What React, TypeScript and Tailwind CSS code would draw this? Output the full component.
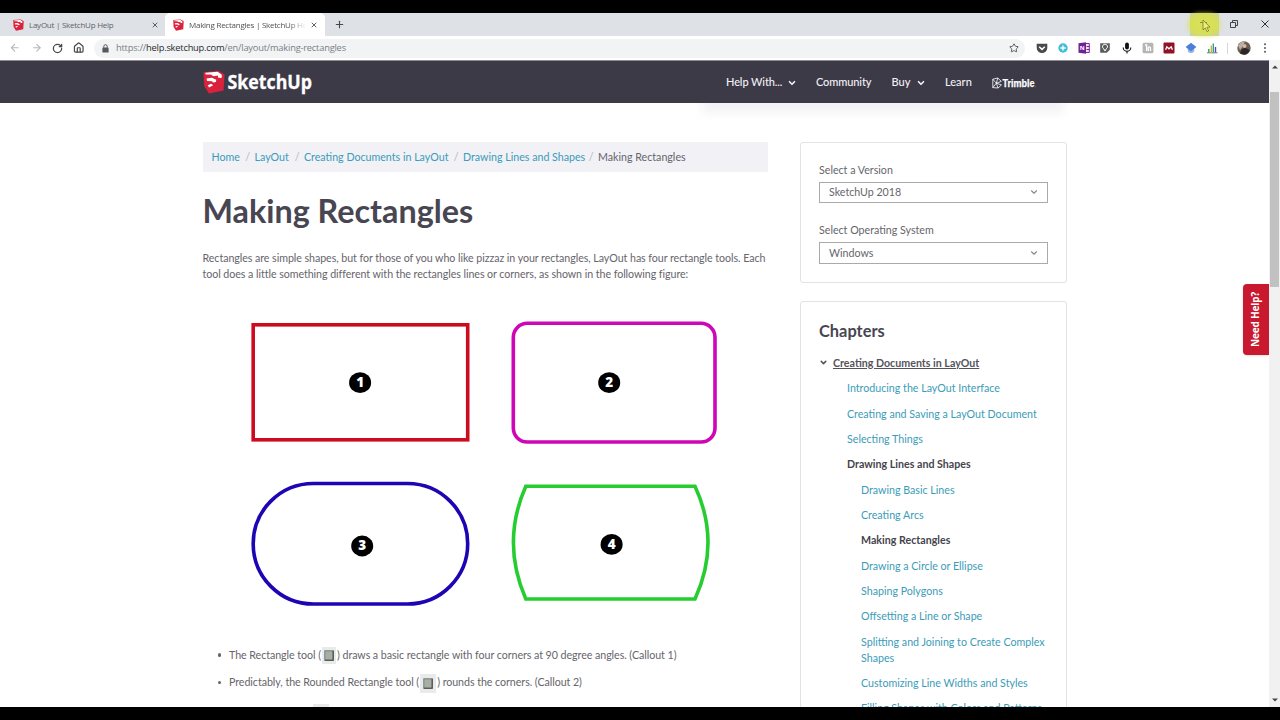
import type { ReactNode } from 'react';
import { ArrowLeft, ArrowRight, ChevronDown, House, Plus, RotateCw, Star, X } from 'lucide-react';

interface Crumb {
  label: string;
  width: string;
}

interface Chapter {
  label: string;
  nested?: boolean;
  current?: boolean;
}

const crumbs: Crumb[] = [
  { label: 'Home', width: 'w-[43px]' },
  { label: 'LayOut', width: 'w-[49.5px]' },
  { label: 'Creating Documents in LayOut', width: 'w-[159px]' },
  { label: 'Drawing Lines and Shapes', width: 'w-[135px]' },
];

const chapters: Chapter[] = [
  { label: 'Introducing the LayOut Interface' },
  { label: 'Creating and Saving a LayOut Document' },
  { label: 'Selecting Things' },
  { label: 'Drawing Lines and Shapes', current: true },
  { label: 'Drawing Basic Lines', nested: true },
  { label: 'Creating Arcs', nested: true },
  { label: 'Making Rectangles', nested: true, current: true },
  { label: 'Drawing a Circle or Ellipse', nested: true },
  { label: 'Shaping Polygons', nested: true },
  { label: 'Offsetting a Line or Shape', nested: true },
  { label: 'Splitting and Joining to Create Complex Shapes', nested: true },
  { label: 'Customizing Line Widths and Styles', nested: true },
  { label: 'Filling Shapes with Colors and Patterns', nested: true },
];

function SketchUpMark({ className }: { className: string }) {
  return (
    <svg viewBox="0 0 22 24" className={className}>
      <path d="M0.5 2.2 15.5 0.8 21.5 4.5 20.5 20.5 6 23.5 1.2 16Z" fill="#d9233c" />
      <path d="M2.4 2.8 14.6 1.8 18.8 4.8 18.6 8 15.2 7.8 14.8 5.6 10.4 6.2 8 4.6 2.6 4.6Z" fill="#fff" />
      <path d="M3.6 8.6 8.8 7.8 13.2 9.8 13 12 9.8 12.6 9.2 11.2 4 11Z" fill="#fff" />
      <path d="M4.8 15.2 8.2 13.8 10.2 15.2 6 17.4Z" fill="#fff" />
    </svg>
  );
}

function TabStrip() {
  return (
    <div className="flex h-[23px] shrink-0 items-stretch bg-[#dee1e6] font-['Open_Sans',sans-serif] text-[8px] text-[#5f6368]">
      <div className="flex w-[165px] items-center pl-[13px] pr-[6px]">
        <SketchUpMark className="h-[12px] w-[11px]" />
        <span className="ml-[5px] flex-1 whitespace-nowrap tracking-[-0.25px]">LayOut | SketchUp Help</span>
        <X className="size-[8px] text-[#45484c]" strokeWidth={2.6} />
      </div>
      <div className="flex w-[160px] items-center rounded-t-[5px] bg-white pl-[8px] pr-[7px] text-[#45484c]">
        <SketchUpMark className="h-[12px] w-[11px] shrink-0" />
        <span className="ml-[5px] mr-[4px] w-[118px] overflow-hidden whitespace-nowrap bg-gradient-to-r from-[#45484c] from-85% to-white bg-clip-text tracking-[-0.25px] text-transparent">
          Making Rectangles | SketchUp Help
        </span>
        <X className="size-[8px] shrink-0" strokeWidth={2.6} />
      </div>
      <Plus className="ml-[8.5px] size-[11px] self-center text-[#45484c]" strokeWidth={2.4} />
      <div className="ml-auto flex">
        <div className="relative flex w-[29px] items-center justify-center bg-[#ccd29a]">
          <div className="absolute -left-[2px] top-0 h-[23px] w-[32px] rounded-full bg-[#dbe63a]/70 blur-[2px]" />
          <svg viewBox="0 0 12 14" className="relative mt-[3px] h-[14px] w-[12px]" fill="none">
            <path d="M1 3.5h7" stroke="#77802a" strokeWidth="0.8" />
            <path d="M4 1v10l2.3-2.1 1.7 3.8 1.7-.8L8 8.3l3-.2Z" fill="#e9ec83" stroke="#7d7f20" strokeWidth="0.8" />
          </svg>
        </div>
        <div className="flex w-[30px] items-center justify-center">
          <svg viewBox="0 0 8 8" className="-mt-[2px] size-[8px]" fill="none" stroke="#333" strokeWidth="0.9">
            <path d="M.5 2.5h5v5h-5zM2.5 2.5v-2h5v5h-2" />
          </svg>
        </div>
        <div className="flex w-[31px] items-center justify-center">
          <svg viewBox="0 0 8 8" className="-mt-[2px] size-[8px]" fill="none" stroke="#333">
            <path d="M.5.5l7 7M7.5.5l-7 7" />
          </svg>
        </div>
      </div>
    </div>
  );
}

function Extensions() {
  return (
    <div className="flex items-center gap-[9.3px]">
      <svg viewBox="0 0 12 12" className="size-[12px]">
        <path d="M.7 1.8h10.6v4a5.3 5.3 0 0 1-10.6 0Z" fill="#4a4a4d" />
        <path d="M3.2 4.8 6 7.4l2.8-2.6" fill="none" stroke="#fff" strokeWidth="1.5" />
      </svg>
      <svg viewBox="0 0 12 12" className="size-[12px]">
        <circle cx="6" cy="6" r="4.7" fill="#3fbfdb" />
        <path d="M6 3.4v5.2M3.4 6h5.2" stroke="#fff" strokeWidth="1.4" />
      </svg>
      <svg viewBox="0 0 12 12" className="size-[12px]">
        <path d="M5 1.5h6.3v9H5z" fill="#f3e6f8" stroke="#7b2a9d" />
        <path d="M8.5 4.5h3M8.5 7.5h3" stroke="#7b2a9d" />
        <path d="M.5 1.2 8 .3v11.4L.5 10.8Z" fill="#731f96" />
        <text x="4.2" y="8" fontSize="6" fontWeight="700" textAnchor="middle" fill="#fff" fontFamily="Open Sans">N</text>
      </svg>
      <svg viewBox="0 0 12 12" className="size-[12px]">
        <path d="M1.2 1.2h9.6v6.5l-3 3H1.2Z" fill="#5c5c5c" />
        <path d="M6 9 4.8 6.9a2.5 2.5 0 1 1 2.4 0Z" fill="none" stroke="#fff" strokeWidth="1" />
      </svg>
      <svg viewBox="0 0 12 12" className="size-[12px]">
        <rect x="4.1" y=".6" width="3.8" height="6.8" rx="1.9" fill="#111" />
        <path d="M2.2 5.5a3.8 3.8 0 0 0 7.6 0M6 9.2v2.2" fill="none" stroke="#111" strokeWidth="1.1" />
      </svg>
      <svg viewBox="0 0 12 12" className="size-[12px]">
        <rect x=".6" y=".8" width="10.8" height="10.4" rx="1.5" fill="#b5b5b5" />
        <path d="M3 3h1.6v6M6.3 9V5.4q2.2-1.2 2.2 1V9" fill="none" stroke="#fff" strokeWidth="1.3" />
      </svg>
      <svg viewBox="0 0 12 12" className="size-[12px]">
        <rect x=".5" y=".6" width="11" height="10.8" rx="1" fill="#8f1227" />
        <path d="M2.6 7.8 3.8 4.8 6 6.8 8.2 4.8 9.4 7.8" fill="none" stroke="#fff" strokeWidth="1.3" />
      </svg>
      <svg viewBox="0 0 12 12" className="size-[12px]">
        <circle cx="6" cy="7.8" r="3.3" fill="#90b4ee" />
        <path d="M6 .8 11.4 5 6 9.2.6 5Z" fill="#4a7fdc" />
      </svg>
      <svg viewBox="0 0 12 12" className="size-[12px]" strokeWidth="1.4">
        <path d="M1 10.8h10.5" stroke="#777" strokeWidth="1" />
        <path d="M2.8 7v3.5" stroke="#3b9a4b" />
        <path d="M5.3 3.5v7" stroke="#c9b24a" />
        <path d="M7.3 1.5v9" stroke="#39a07b" />
        <path d="M9.5 5v5.5" stroke="#4653b0" />
      </svg>
    </div>
  );
}

function Toolbar() {
  return (
    <div className="flex h-[24px] shrink-0 items-center bg-white pl-[9px]">
      <div className="flex items-center gap-[10px] text-[#b6b8bb]">
        <ArrowLeft className="size-[11.5px]" strokeWidth={2.3} />
        <ArrowRight className="size-[11.5px]" strokeWidth={2.3} />
        <RotateCw className="size-[11px] text-[#46494d]" strokeWidth={2.8} />
        <House className="size-[11.5px] text-[#46494d]" strokeWidth={2.5} />
      </div>
      <div className="ml-[9px] flex h-[19px] w-[931px] items-center rounded-full bg-[#f1f3f4] pl-[8px] pr-[6px]">
        <svg viewBox="0 0 7 9" className="h-[9px] w-[7px]">
          <rect x=".4" y="3.4" width="6.2" height="5.2" rx=".7" fill="#55585c" />
          <path d="M1.8 3.8V2.4a1.7 1.7 0 0 1 3.4 0v1.4" fill="none" stroke="#55585c" />
        </svg>
        <span className="ml-[7.5px] flex-1 whitespace-nowrap font-['Open_Sans',sans-serif] text-[9.3px] tracking-[-0.21px] text-[#7b7f84]">
          https://<span className="text-[#292b2e]">help.sketchup.com</span>/en/layout/making-rectangles
        </span>
        <Star className="size-[10px] text-[#55585c]" strokeWidth={2.3} />
      </div>
      <div className="ml-[11px]">
        <Extensions />
      </div>
      <div className="ml-[9px] h-[11px] w-px bg-[#d4d6d9]" />
      <svg viewBox="0 0 14 14" className="ml-[9px] size-[14px]">
        <circle cx="7" cy="7" r="6.7" fill="#6a5c52" />
        <path d="M1 4.5Q4 0 8 .6L6 5 3 9Z" fill="#b9b0a6" />
        <circle cx="7.5" cy="5" r="2" fill="#d9b79f" />
        <path d="M3 12.5q1-5 4.5-5.5 4 .5 5 2.5-2 4.5-5.5 4.2Z" fill="#2b2725" />
      </svg>
      <svg viewBox="0 0 4 12" className="ml-[12.5px] h-[12px] w-[4px] fill-[#4a4d51]">
        <circle cx="2" cy="2.2" r="0.95" />
        <circle cx="2" cy="6" r="0.95" />
        <circle cx="2" cy="9.8" r="0.95" />
      </svg>
    </div>
  );
}

function SiteHeader() {
  return (
    <header className="flex h-[42px] shrink-0 items-center bg-[#3d3a48] pl-[203px] font-['Lato',sans-serif] text-[11px] font-medium text-[#f2f1f5]">
      <SketchUpMark className="h-[24px] w-[22px]" />
      <svg viewBox="0 0 88 28" className="ml-[2px] h-[28px] w-[88px] overflow-visible">
        <text x="0.5" y="21.4" fontSize="19.5" fontWeight="700" fontFamily="Open Sans" textLength="84.5" lengthAdjust="spacingAndGlyphs" fill="#fff" stroke="#fff" strokeWidth="0.3">SketchUp</text>
      </svg>
      <nav className="ml-[411px] flex items-center pt-px">
        <span className="flex w-[90px] items-center whitespace-nowrap tracking-[-0.1px]">
          Help With...
          <ChevronDown className="ml-auto mr-[19px] size-[10px]" strokeWidth={4} />
        </span>
        <span className="w-[75.5px] tracking-[-0.1px]">Community</span>
        <span className="flex w-[53.5px] items-center">
          Buy
          <ChevronDown className="ml-auto mr-[19px] size-[10px]" strokeWidth={4} />
        </span>
        <span className="w-[47px]">Learn</span>
        <svg viewBox="0 0 46 14" className="h-[14px] w-[46px] overflow-visible">
          <path
            d="M.8 3.2V11.6L4.3 7.2.8 3.2 5.8 2 9.3 5.4 4.3 7.2 9.5 8.9 6 12 .8 11.6M4.3 7.2 5.8 2M4.3 7.2 6 12"
            fill="none"
            stroke="#fff"
            strokeWidth="0.8"
          />
          <text x="10.5" y="11.4" fontSize="11" fontWeight="700" fontFamily="Liberation Sans" textLength="32" lengthAdjust="spacingAndGlyphs" fill="#fff" stroke="#fff" strokeWidth="0.25">Trimble</text>
          <circle cx="43.5" cy="10.8" r="0.4" fill="#bbb" />
        </svg>
      </nav>
    </header>
  );
}

function Callout({ x, y, n }: { x: number; y: number; n: number }) {
  return (
    <g>
      <ellipse cx={x} cy={y} rx="11" ry="10.4" fill="#000" />
      <text x={x} y={y + 4.3} fontSize="13.5" fontWeight="800" fontFamily="Open Sans" textAnchor="middle" fill="#fff">
        {n}
      </text>
    </g>
  );
}

function RectangleFigure() {
  return (
    <svg viewBox="203 290 565 340" className="block h-[340px] w-[565px]" fill="none" strokeWidth="3.6">
      <rect x="253.2" y="324.8" width="214.5" height="115" stroke="#cd0a1e" />
      <rect x="513.3" y="323.3" width="201.7" height="118.7" rx="14" stroke="#cf06b8" />
      <rect x="253.2" y="483.5" width="214.5" height="120.5" rx="60.2" stroke="#1e05b4" />
      <path d="M525.8 486.2H695Q721 542.5 695 599H525.8Q501 542.5 525.8 486.2Z" stroke="#27cd30" />
      <Callout x={360.1} y={382.7} n={1} />
      <Callout x={609.2} y={382.7} n={2} />
      <Callout x={362.2} y={546} n={3} />
      <Callout x={611.6} y={544.4} n={4} />
    </svg>
  );
}

function ToolIcon({ className }: { className: string }) {
  return (
    <span className={`flex items-center justify-center bg-[#e9ebeb] ${className}`}>
      <svg viewBox="0 0 10 11" className="h-[11px] w-[10px]">
        <rect x=".8" y=".8" width="8.4" height="9.4" fill="#a7aea5" stroke="#777c77" />
        <path d="M9.2.8v9.4H.8" fill="none" stroke="#454845" strokeWidth="1.1" />
      </svg>
    </span>
  );
}

function Bullet({ children }: { children: ReactNode }) {
  return (
    <li className="flex h-[27.5px] items-center whitespace-nowrap tracking-[-0.05px]">
      <span className="mr-[8px] size-[3.5px] rounded-full bg-[#66656b]" />
      {children}
    </li>
  );
}

function Article() {
  return (
    <main className="w-[565.5px] pt-[39px]">
      <div className="flex h-[30px] items-center bg-[#f1f1f6] pl-[9px] text-[#3b9cb8]">
        {crumbs.map((crumb) => (
          <span key={crumb.label} className={`flex shrink-0 whitespace-nowrap ${crumb.width}`}>
            {crumb.label}
            <span className="ml-auto mr-[4.5px] text-[#b5b5bb]">/</span>
          </span>
        ))}
        <span className="whitespace-nowrap text-[#66656b]">Making Rectangles</span>
      </div>
      <h1 className="mt-[17px] text-[32.3px] font-bold leading-[44px] text-[#474652]">Making Rectangles</h1>
      <p className="mt-[17px] whitespace-nowrap tracking-[-0.055px]">
        Rectangles are simple shapes, but for those of you who like pizzaz in your rectangles, LayOut has four rectangle tools. Each
        <br />
        tool does a little something different with the rectangles lines or corners, as shown in the following figure:
      </p>
      <div className="mt-[8px]">
        <RectangleFigure />
      </div>
      <ul className="mt-[11px] pl-[15px]">
        <Bullet>
          The Rectangle tool (
          <ToolIcon className="mx-px mt-[2px] h-[17px] w-[14px]" />
          ) draws a basic rectangle with four corners at 90 degree angles. (Callout 1)
        </Bullet>
        <Bullet>
          Predictably, the Rounded Rectangle tool (
          <ToolIcon className="mx-px mt-[3px] h-[19px] w-[16px]" />
          ) rounds the corners. (Callout 2)
        </Bullet>
      </ul>
      <div className="ml-[110px] mt-[8px]">
        <ToolIcon className="h-[17px] w-[16px]" />
      </div>
    </main>
  );
}

function SelectField({ label, value }: { label: string; value: string }) {
  return (
    <div>
      <div>{label}</div>
      <div className="mt-[4px] flex h-[21.5px] items-center border border-[#aaa] pl-[9px] pr-[8px] text-[#66656b]">
        <span className="flex-1">{value}</span>
        <ChevronDown className="size-[10px] text-[#8c8c90]" strokeWidth={2.8} />
      </div>
    </div>
  );
}

function Sidebar() {
  return (
    <aside className="ml-[32px] w-[267px] pt-[39px]">
      <div className="flex h-[141px] flex-col gap-[19px] rounded-[3px] border border-[#e3e3e5] px-[18px] pt-[18.5px]">
        <SelectField label="Select a Version" value="SketchUp 2018" />
        <SelectField label="Select Operating System" value="Windows" />
      </div>
      <div className="mt-[18px] rounded-[3px] border border-[#e3e3e5] px-[18px] pb-[40px] pt-[16.5px]">
        <h2 className="text-[16.4px] font-bold leading-[24px] text-[#474652]">Chapters</h2>
        <div className="mt-[12px] flex items-center font-bold text-[#55545c]">
          <ChevronDown className="mr-[5px] size-[9px]" strokeWidth={4} />
          <span className="whitespace-nowrap underline">Creating Documents in LayOut</span>
        </div>
        <ul className="mt-[9.8px] flex flex-col gap-[9.35px] pl-[28px] text-[#3b9cb8]">
          {chapters.map(({ label, nested, current }) => (
            <li key={label} className={`${nested ? 'ml-[14px]' : 'whitespace-nowrap'} ${current ? 'font-bold text-[#45444c]' : ''}`}>
              {label}
            </li>
          ))}
        </ul>
      </div>
    </aside>
  );
}

function Scrollbar() {
  return (
    <div className="flex w-[11px] shrink-0 flex-col items-center bg-[#f1f1f1]">
      <svg viewBox="0 0 6 4" className="mt-[5px] h-[4px] w-[6px]">
        <path d="M0 3.5 3 .5l3 3Z" fill="#444" />
      </svg>
      <div className="mt-[23px] h-[195px] w-[9px] bg-[#c1c1c1]" />
      <svg viewBox="0 0 6 4" className="mb-[5px] mt-auto h-[4px] w-[6px]">
        <path d="M0 .5l3 3 3-3Z" fill="#444" />
      </svg>
    </div>
  );
}

export default function App() {
  return (
    <div className="flex h-[720px] w-[1280px] flex-col overflow-hidden bg-black py-[13px]">
      <TabStrip />
      <Toolbar />
      <div className="flex min-h-0 flex-1 bg-white">
        <div className="relative flex flex-1 flex-col overflow-hidden border-t border-[#8c8c92]">
          <SiteHeader />
          <div className="relative flex min-h-0 flex-1 items-start overflow-hidden pl-[202.5px] font-['Lato',sans-serif] text-[10.667px] leading-[16px] text-[#66656b]">
            <div className="absolute -top-[8px] left-[702px] h-[18px] w-[362px] bg-[#f3f3f5] blur-[5px]" />
            <Article />
            <Sidebar />
          </div>
          <div className="absolute right-0 top-[223px] flex h-[71px] w-[26px] items-center justify-center rounded-l-[4px] bg-[#c8192e] shadow-sm">
            <span className="-rotate-90 whitespace-nowrap font-['Open_Sans',sans-serif] text-[10px] font-bold tracking-[-0.15px] text-white">Need Help?</span>
          </div>
        </div>
        <Scrollbar />
      </div>
    </div>
  );
}
